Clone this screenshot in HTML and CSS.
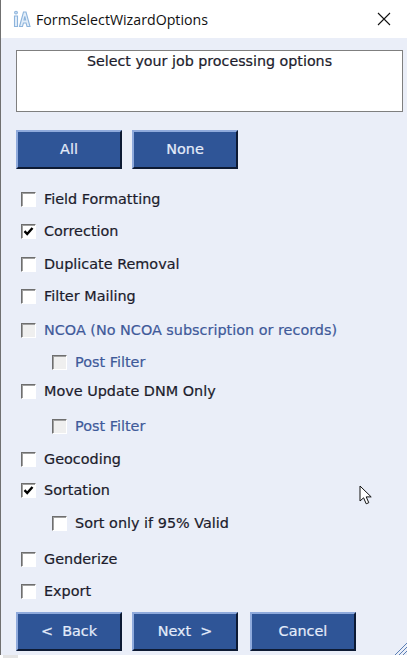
FILE: index.html
```html
<!DOCTYPE html>
<html lang="en">
<head>
    <meta charset="UTF-8">
    <meta name="viewport" content="width=device-width, initial-scale=1.0">
    <title>FormSelectWizardOptions</title>
    <link rel="stylesheet" href="styles.css">
</head>
<body>

<div class="window">
    <!-- title bar -->
    <header class="titlebar">
        <svg class="app-icon" width="18" height="18" viewBox="0 0 18 18" fill="none" stroke="#8db4dc" stroke-width="1.1">
            <circle cx="3" cy="2.6" r="1.4" fill="#cfe0f2"/>
            <path d="M1.5 6h3v10.5h-3z" fill="#e3eef9"/>
            <path d="M6.5 16.5 10.5 2h2.5l4 14.5h-3l-.9-3.5H10.4l-.9 3.5z" fill="#e3eef9"/>
            <path d="M11 10h1.6l-.8-3.6z" fill="#fff"/>
        </svg>
        <span class="title-text">FormSelectWizardOptions</span>
        <svg class="close-icon" width="14" height="14" viewBox="0 0 14 14" stroke="#111" stroke-width="1.1">
            <path d="M1 1l12 12M13 1 1 13"/>
        </svg>
    </header>

    <main class="content">
        <div class="prompt">Select your job processing options</div>

        <div class="btn-row top-buttons">
            <button class="btn">All</button>
            <button class="btn">None</button>
        </div>

        <ul class="options">
            <li class="option"><span class="check"></span>Field Formatting</li>
            <li class="option"><span class="check"><svg class="tick" width="13" height="13" viewBox="0 0 13 13"><path d="M2.5 6.2 5.2 9 10.5 3" fill="none" stroke="#000" stroke-width="2.4"/></svg></span>Correction</li>
            <li class="option"><span class="check"></span>Duplicate Removal</li>
            <li class="option"><span class="check"></span>Filter Mailing</li>
            <li class="option disabled"><span class="check"></span>NCOA (No NCOA subscription or records)</li>
            <li class="option sub disabled"><span class="check"></span>Post Filter</li>
            <li class="option"><span class="check"></span>Move Update DNM Only</li>
            <li class="option sub disabled"><span class="check"></span>Post Filter</li>
            <li class="option"><span class="check"></span>Geocoding</li>
            <li class="option"><span class="check"><svg class="tick" width="13" height="13" viewBox="0 0 13 13"><path d="M2.5 6.2 5.2 9 10.5 3" fill="none" stroke="#000" stroke-width="2.4"/></svg></span>Sortation</li>
            <li class="option sub"><span class="check"></span>Sort only if 95% Valid</li>
            <li class="option"><span class="check"></span>Genderize</li>
            <li class="option"><span class="check"></span>Export</li>
        </ul>

        <div class="btn-row bottom-buttons">
            <button class="btn">&lt;&nbsp; Back</button>
            <button class="btn">Next &nbsp;&gt;</button>
            <button class="btn">Cancel</button>
        </div>
    </main>

    <!-- resize grip -->
    <svg class="grip" width="12" height="12" viewBox="0 0 12 12" stroke="#5b7fb5" stroke-width="1">
        <path d="M0 12 12 0M4 12l8-8M8 12l4-4"/>
    </svg>
</div>

<!-- bit of the desktop showing under the window -->
<div class="desktop-peek"></div>

<!-- mouse pointer caught in the shot -->
<svg class="pointer" width="14" height="20" viewBox="0 0 14 20">
    <path d="M1 1v15l3.6-3.2 2.6 6 2.6-1.1-2.6-5.8h5z" fill="#fff" stroke="#111" stroke-width="1"/>
</svg>

</body>
</html>
```

FILE: styles.css
```css
:root {
  --panel-bg: #eaeef8;
  --btn-bg: #2f5597;
  --disabled-text: #3f5a9a;
  --text-color: #1c1c2c;
}

html, body {
  margin: 0;
  height: 100%;
  background: #fff;
}

body {
  position: relative;
  font-family: "DejaVu Sans", sans-serif;
  font-size: 14.4px;
  color: var(--text-color);
  overflow: hidden;
  -webkit-text-stroke: 0.2px currentColor;
}

/* window frame */
.window {
  position: relative;
  width: 406px;
  height: 655px;
  border-left: 1px solid #707070;
  background: var(--panel-bg);
}

.titlebar {
  display: flex;
  align-items: center;
  height: 38px;
  padding: 0 16px 0 12px;
  background: #fff;
  -webkit-text-stroke: 0;
}

.app-icon {
  flex: none;
  margin-right: 5px;
}

.title-text {
  flex: 1;
  font-family: "Open Sans", sans-serif;
  font-size: 14.2px;
  color: #111;
}

.close-icon {
  flex: none;
}

.content {
  padding: 12px 4px 0 15px;
}

.prompt {
  box-sizing: border-box;
  height: 62px;
  padding-top: 2px;
  border: 1px solid #7f7f7f;
  background: #fff;
  font-size: 14.25px;
  text-align: center;
}

.btn-row {
  display: flex;
  gap: 10px;
}

.top-buttons {
  margin-top: 18px;
}

.bottom-buttons {
  margin-top: 12px;
}

.bottom-buttons .btn:last-child {
  margin-left: 2px;
}

.btn {
  box-sizing: border-box;
  width: 106px;
  height: 39px;
  padding: 0 0 2px;
  border: 2px solid;
  border-color: #8faadc #0d1a33 #0d1a33 #8faadc;
  background: var(--btn-bg);
  color: #e4ecfa;
  font-family: inherit;
  font-size: 14.4px;
}

/* option list, rows are not evenly spaced in the form */
.options {
  display: grid;
  grid-template-rows: 32px 33px 32px 34px 32px 29px 35px 33px 31px 33px 36px 32px 18px;
  align-items: start;
  margin: 21px 0 0;
  padding: 0;
  list-style: none;
}

.option {
  display: flex;
  align-items: center;
  gap: 8px;
  height: 18px;
  padding-left: 5px;
}

.option.sub {
  padding-left: 36px;
}

.option.disabled {
  color: var(--disabled-text);
}

.check {
  box-sizing: border-box;
  flex: none;
  width: 15px;
  height: 15px;
  border: 1px solid;
  border-color: #6e6e6e #fff #fff #6e6e6e;
  box-shadow: inset 1px 1px 0 #a0a0a0;
  background: #fff;
}

.disabled .check {
  background: #efefef;
}

.tick {
  display: block;
}

.grip {
  position: absolute;
  right: 0;
  bottom: 0;
}

.desktop-peek {
  width: 15px;
  height: 3px;
  margin-left: 3px;
  background: #e4e4e4;
}

.pointer {
  position: absolute;
  left: 359px;
  top: 485px;
}
```
